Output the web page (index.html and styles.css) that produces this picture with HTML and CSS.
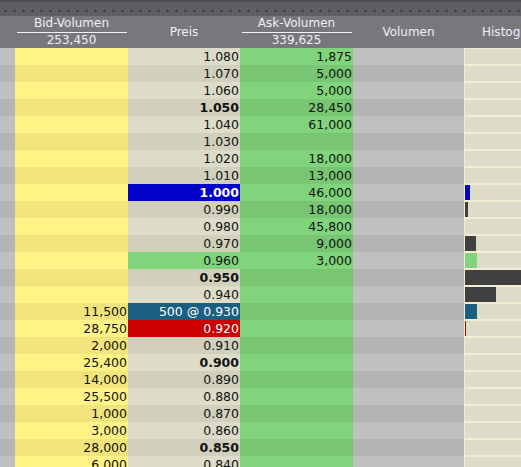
FILE: index.html
```html
<!DOCTYPE html>
<html lang="de">
<head>
    <meta charset="UTF-8">
    <title>Orderbuch</title>
    <link rel="stylesheet" href="styles.css">
</head>
<body>

<div class="ladder">
    <div class="grip"></div>

    <div class="head">
        <div class="strip"></div>
        <div class="hcell bid">
            <span class="htitle">Bid-Volumen</span>
            <span class="hsum">253,450</span>
        </div>
        <div class="hcell preis">Preis</div>
        <div class="hcell ask">
            <span class="htitle">Ask-Volumen</span>
            <span class="hsum">339,625</span>
        </div>
        <div class="hcell vol">Volumen</div>
        <div class="hcell hist">Histogramm</div>
    </div>

    <div class="rows">
        <div class="row"><div class="strip"></div><div class="bid"></div><div class="preis">1.080</div><div class="ask">1,875</div><div class="vol"></div><div class="hist"></div></div>
        <div class="row"><div class="strip"></div><div class="bid"></div><div class="preis">1.070</div><div class="ask">5,000</div><div class="vol"></div><div class="hist"></div></div>
        <div class="row"><div class="strip"></div><div class="bid"></div><div class="preis">1.060</div><div class="ask">5,000</div><div class="vol"></div><div class="hist"></div></div>
        <div class="row"><div class="strip"></div><div class="bid"></div><div class="preis strong">1.050</div><div class="ask">28,450</div><div class="vol"></div><div class="hist"></div></div>
        <div class="row"><div class="strip"></div><div class="bid"></div><div class="preis">1.040</div><div class="ask">61,000</div><div class="vol"></div><div class="hist"></div></div>
        <div class="row"><div class="strip"></div><div class="bid"></div><div class="preis">1.030</div><div class="ask"></div><div class="vol"></div><div class="hist"></div></div>
        <div class="row"><div class="strip"></div><div class="bid"></div><div class="preis">1.020</div><div class="ask">18,000</div><div class="vol"></div><div class="hist"></div></div>
        <div class="row"><div class="strip"></div><div class="bid"></div><div class="preis">1.010</div><div class="ask">13,000</div><div class="vol"></div><div class="hist"></div></div>
        <div class="row"><div class="strip"></div><div class="bid"></div><div class="preis strong last">1.000</div><div class="ask">46,000</div><div class="vol"></div><div class="hist"><span class="bar bar-last" style="width: 5px"></span></div></div>
        <div class="row"><div class="strip"></div><div class="bid"></div><div class="preis">0.990</div><div class="ask">18,000</div><div class="vol"></div><div class="hist"><span class="bar" style="width: 3px"></span></div></div>
        <div class="row"><div class="strip"></div><div class="bid"></div><div class="preis">0.980</div><div class="ask">45,800</div><div class="vol"></div><div class="hist"></div></div>
        <div class="row"><div class="strip"></div><div class="bid"></div><div class="preis">0.970</div><div class="ask">9,000</div><div class="vol"></div><div class="hist"><span class="bar" style="width: 11px"></span></div></div>
        <div class="row"><div class="strip"></div><div class="bid"></div><div class="preis best-ask">0.960</div><div class="ask">3,000</div><div class="vol"></div><div class="hist"><span class="bar bar-ask" style="width: 12px"></span></div></div>
        <div class="row"><div class="strip"></div><div class="bid"></div><div class="preis strong">0.950</div><div class="ask"></div><div class="vol"></div><div class="hist"><span class="bar" style="width: 60px"></span></div></div>
        <div class="row"><div class="strip"></div><div class="bid"></div><div class="preis">0.940</div><div class="ask"></div><div class="vol"></div><div class="hist"><span class="bar" style="width: 31px"></span></div></div>
        <div class="row"><div class="strip"></div><div class="bid">11,500</div><div class="preis own">500 @ 0.930</div><div class="ask"></div><div class="vol"></div><div class="hist"><span class="bar bar-own" style="width: 12px"></span></div></div>
        <div class="row"><div class="strip"></div><div class="bid">28,750</div><div class="preis best-bid">0.920</div><div class="ask"></div><div class="vol"></div><div class="hist"><span class="bar bar-bid" style="width: 1px"></span></div></div>
        <div class="row"><div class="strip"></div><div class="bid">2,000</div><div class="preis">0.910</div><div class="ask"></div><div class="vol"></div><div class="hist"></div></div>
        <div class="row"><div class="strip"></div><div class="bid">25,400</div><div class="preis strong">0.900</div><div class="ask"></div><div class="vol"></div><div class="hist"></div></div>
        <div class="row"><div class="strip"></div><div class="bid">14,000</div><div class="preis">0.890</div><div class="ask"></div><div class="vol"></div><div class="hist"></div></div>
        <div class="row"><div class="strip"></div><div class="bid">25,500</div><div class="preis">0.880</div><div class="ask"></div><div class="vol"></div><div class="hist"></div></div>
        <div class="row"><div class="strip"></div><div class="bid">1,000</div><div class="preis">0.870</div><div class="ask"></div><div class="vol"></div><div class="hist"></div></div>
        <div class="row"><div class="strip"></div><div class="bid">3,000</div><div class="preis">0.860</div><div class="ask"></div><div class="vol"></div><div class="hist"></div></div>
        <div class="row"><div class="strip"></div><div class="bid">28,000</div><div class="preis strong">0.850</div><div class="ask"></div><div class="vol"></div><div class="hist"></div></div>
        <div class="row"><div class="strip"></div><div class="bid">6,000</div><div class="preis">0.840</div><div class="ask"></div><div class="vol"></div><div class="hist"></div></div>
    </div>
</div>

</body>
</html>
```

FILE: styles.css
```css
body {
    margin: 0;
    padding: 0;
    width: 521px;
    height: 467px;
    overflow: hidden;
    background-color: #78787c;
    font-family: "DejaVu Sans", Verdana, sans-serif;
}

.ladder {
    width: 640px;
}

/* griff oben mit punkten */
.grip {
    height: 16px;
    box-sizing: border-box;
    border-top: 2px solid #4c4c50;
    background-color: #606064;
    background-image: radial-gradient(circle, #333336 0.9px, transparent 1.3px);
    background-size: 9px 4px;
    background-position: 1px 7px;
    background-repeat: repeat-x;
}

.strip { width: 15px; flex: none; }
.bid { width: 113px; flex: none; }
.preis { width: 112px; flex: none; }
.ask { width: 113px; flex: none; }
.vol { width: 111px; flex: none; }
.hist { width: 114px; flex: none; }

/* kopfzeile */
.head {
    display: flex;
    height: 32px;
    background-color: #78787c;
    color: #eef0f6;
    font-size: 12px;
}

.hcell {
    display: flex;
    flex-direction: column;
    align-items: center;
    justify-content: center;
}

.head .hist {
    width: 108px;
    margin-left: 1px;
    white-space: nowrap;
}

.hcell.bid,
.hcell.ask {
    justify-content: flex-start;
}

.htitle {
    width: 110px;
    height: 16px;
    line-height: 15px;
    text-align: center;
    border-bottom: 1px solid #f4f4f8;
}

.hsum {
    height: 15px;
    line-height: 15px;
}

/* zeilen */
.row {
    display: flex;
    height: 17px;
    line-height: 17px;
    font-size: 12.5px;
    color: #111;
}

.row .bid,
.row .preis,
.row .ask {
    text-align: right;
    padding-right: 1px;
    box-sizing: border-box;
}

.row .strip,
.row .vol { background-color: #c0c0c0; }
.row .bid { background-color: #fff385; }
.row .preis { background-color: #dcdcc8; }
.row .ask { background-color: #80d47c; }

.row:nth-child(even) .strip,
.row:nth-child(even) .vol { background-color: #b4b4b4; }
.row:nth-child(even) .bid { background-color: #f2e47c; }
.row:nth-child(even) .preis { background-color: #d0d0bc; }
.row:nth-child(even) .ask { background-color: #78c674; }

.row .hist {
    box-sizing: border-box;
    border-left: 1px solid #f3eed2;
    border-top: 1px solid #f3eed2;
    border-bottom: 1px solid #f3eed2;
    background-color: #dcdcc8;
    display: flex;
}

.preis.strong { font-weight: bold; }

.row .preis.last {
    background-color: #0000c8;
    color: #fff;
}

.row .preis.best-ask { background-color: #80d47c; }

.row .preis.own {
    background-color: #1a5e80;
    color: #fff;
}

.row .preis.best-bid {
    background-color: #cc0000;
    color: #fff;
}

/* histogramm balken */
.bar {
    display: block;
    height: 15px;
    background-color: #404040;
}

.bar-last { background-color: #0000c8; }
.bar-ask { background-color: #80d47c; }
.bar-own { background-color: #1a5e80; }
.bar-bid { background-color: #b00000; }
```
